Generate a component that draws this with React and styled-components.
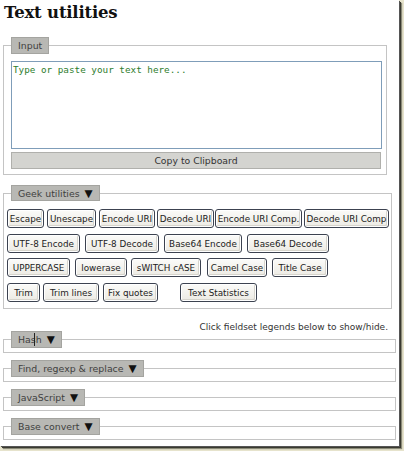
import React from "react";
import styled, { createGlobalStyle } from "styled-components";

const Global = createGlobalStyle`
  html, body { margin: 0; padding: 0; background: #e6e3cc; }
  body { width: 404px; height: 451px; overflow: hidden; }
  * { box-sizing: border-box; }
`;

const Page = styled.div`
  width: 399px;
  height: 446px;
  background: #ffffff;
  box-shadow: 1px 1px 0 #555, 2px 2px 0 #3a3a30, 3px 3px 1px #8a8a78;
  padding: 0 0 0 3px;
  font-family: "DejaVu Sans", Verdana, sans-serif;
  font-size: 9px;
  color: #333;
  display: flex;
  flex-direction: column;
`;

const Title = styled.h1`
  margin: 0;
  padding: 2px 0 0 1px;
  height: 37px;
  font-family: "DejaVu Serif", Georgia, serif;
  font-weight: bold;
  font-size: 16.5px;
  line-height: 22px;
  color: #111;
  letter-spacing: -0.2px;
`;

const Fieldset = styled.fieldset`
  margin: ${(p) => p.$mt || 0}px 0 0 0;
  padding: 0 0 ${(p) => p.$pb || 0}px ${(p) => p.$pl || 7}px;
  width: ${(p) => p.$w}px;
  border: 1px solid #c4c4c4;
  min-width: 0;
  position: relative;
`;

const Legend = styled.legend`
  padding: 0 6px;
  margin: 0 0 0 ${(p) => p.$ml || 0}px;
  height: ${(p) => p.$h || 17}px;
  line-height: ${(p) => (p.$h || 17) - 2}px;
  background: #b8b8b4;
  border: 1px solid #a4a4a0;
  color: #3f3f3f;
  font-size: 9.4px;
  white-space: nowrap;
  position: relative;
`;

const Arrow = styled.span`
  color: #111;
  font-size: 10.5px;
  margin-left: 5px;
`;

const Cursor = styled.span`
  position: absolute;
  left: 22px;
  top: 1px;
  width: 1px;
  height: 13px;
  background: #222;
`;

const TextArea = styled.textarea`
  display: block;
  margin: 7px 0 0 0;
  width: 371px;
  height: 88px;
  border: 1px solid #7f9db9;
  padding: 2px 1px;
  resize: none;
  font-family: "DejaVu Sans Mono", "Liberation Mono", monospace;
  font-size: 9.3px;
  color: #2e7d2e;
  &::placeholder { color: #2e7d2e; opacity: 1; }
`;

const CopyButton = styled.button`
  display: block;
  margin-top: 3px;
  width: 370px;
  height: 17px;
  background: #d4d4d0;
  border: 1px solid #b0b0ac;
  font-family: "DejaVu Sans", Verdana, sans-serif;
  font-size: 9.3px;
  color: #333;
  padding: 0;
`;

const Rows = styled.div`
  display: flex;
  flex-direction: column;
  margin-top: 8px;
`;

const Row = styled.div`
  display: flex;
  margin-top: ${(p) => p.$mt || 0}px;
`;

const Btn = styled.button`
  flex: none;
  width: ${(p) => p.$w}px;
  height: 19px;
  margin-left: ${(p) => p.$ml || 0}px;
  padding: 0;
  border: 1px solid #3c4250;
  border-radius: 3px;
  background: linear-gradient(#fbfbf9, #eceae3);
  box-shadow: inset 0 0 0 1px #ffffff, inset -1px -1px 0 1px #d6d4cc;
  font-family: "DejaVu Sans", Verdana, sans-serif;
  font-size: 8.8px;
  color: #222;
  white-space: nowrap;
  overflow: hidden;
`;

const Note = styled.div`
  margin-top: 13px;
  height: 11px;
  width: 385px;
  text-align: right;
  font-size: 9px;
  line-height: 11px;
  color: #333;
`;

const rows = [
  {
    mt: 0,
    items: [
      ["Escape", 37, 0],
      ["Unescape", 49, 3],
      ["Encode URI", 56, 3],
      ["Decode URI", 57, 2],
      ["Encode URI Comp.", 87, 1],
      ["Decode URI Comp", 85, 2],
    ],
  },
  {
    mt: 6,
    items: [
      ["UTF-8 Encode", 73, 0],
      ["UTF-8 Decode", 74, 5],
      ["Base64 Encode", 78, 5],
      ["Base64 Decode", 82, 5],
    ],
  },
  {
    mt: 5,
    items: [
      ["UPPERCASE", 63, 0],
      ["lowerase", 52, 5],
      ["sWITCH cASE", 70, 4],
      ["Camel Case", 60, 6],
      ["Title Case", 56, 5],
    ],
  },
  {
    mt: 6,
    items: [
      ["Trim", 33, 0],
      ["Trim lines", 56, 3],
      ["Fix quotes", 55, 4],
      ["Text Statistics", 77, 22],
    ],
  },
];

const collapsed = [
  { label: "Hash", cursor: true },
  { label: "Find, regexp & replace" },
  { label: "JavaScript" },
  { label: "Base convert" },
];

export default function App() {
  return (
    <>
      <Global />
      <Page>
        <Title>Text utilities</Title>
        <Fieldset $w={384} $pb={5}>
          <Legend $h={17}>Input</Legend>
          <TextArea placeholder="Type or paste your text here..." />
          <CopyButton>Copy to Clipboard</CopyButton>
        </Fieldset>
        <Fieldset $w={389} $mt={10} $pl={3} $pb={6}>
          <Legend $h={16} $ml={4}>
            Geek utilities<Arrow>▼</Arrow>
          </Legend>
          <Rows>
            {rows.map((r, i) => (
              <Row key={i} $mt={r.mt}>
                {r.items.map(([label, w, ml]) => (
                  <Btn key={label} $w={w} $ml={ml}>
                    {label}
                  </Btn>
                ))}
              </Row>
            ))}
          </Rows>
        </Fieldset>
        <Note>Click fieldset legends below to show/hide.</Note>
        {collapsed.map((c, i) => (
          <Fieldset key={c.label} $w={393} $mt={i === 0 ? -2 : 7} $pb={4}>
            <Legend $h={17}>
              {c.label}
              <Arrow>▼</Arrow>
              {c.cursor && <Cursor />}
            </Legend>
          </Fieldset>
        ))}
      </Page>
    </>
  );
}
